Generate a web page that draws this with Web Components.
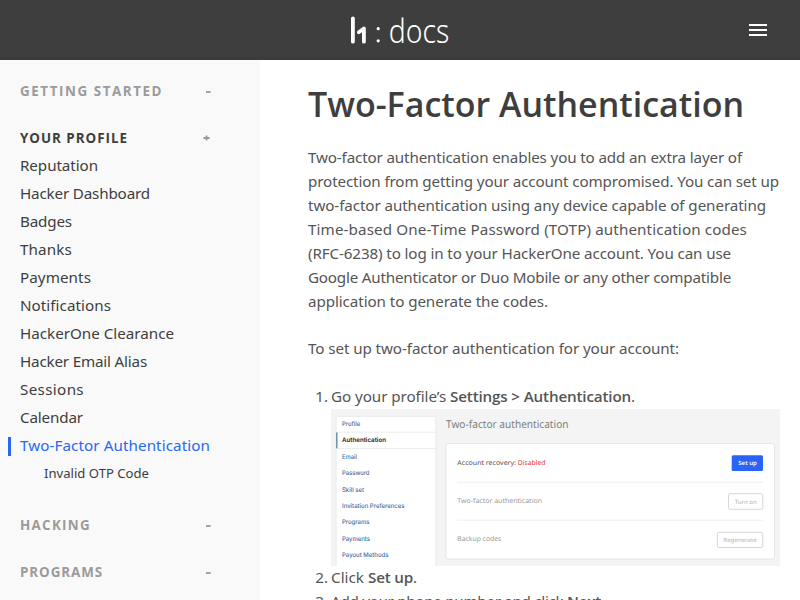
<!DOCTYPE html>
<html lang="en">
<head>
<meta charset="utf-8">
<title>Two-Factor Authentication</title>
<style>
html,body{margin:0;height:600px;overflow:hidden;background:#fff}
body{font-family:"Noto Sans","Open Sans",sans-serif;font-size:15.2px;color:#555}
strong{font-weight:650;font-family:"Open Sans","Noto Sans",sans-serif;font-size:15.2px}
</style>
</head>
<body>
<docs-page>
  <docs-header slot="header"></docs-header>
  <docs-sidebar slot="sidebar">
    <nav-section label="GETTING STARTED" w="143" mark="-"></nav-section>
    <nav-section label="YOUR PROFILE" w="108" mark="+" open>
      <nav-item w="78">Reputation</nav-item>
      <nav-item w="130">Hacker Dashboard</nav-item>
      <nav-item w="52">Badges</nav-item>
      <nav-item w="52">Thanks</nav-item>
      <nav-item w="71">Payments</nav-item>
      <nav-item w="91">Notifications</nav-item>
      <nav-item w="154">HackerOne Clearance</nav-item>
      <nav-item w="127">Hacker Email Alias</nav-item>
      <nav-item w="64">Sessions</nav-item>
      <nav-item w="63">Calendar</nav-item>
      <nav-item w="190" active>Two-Factor Authentication</nav-item>
      <nav-item w="105" sub>Invalid OTP Code</nav-item>
    </nav-section>
    <nav-section label="HACKING" w="71" mark="-"></nav-section>
    <nav-section label="PROGRAMS" w="83" mark="-"></nav-section>
  </docs-sidebar>
  <docs-article>
    <fit-line slot="title" w="436">Two-Factor Authentication</fit-line>
    <text-block>
      <fit-line w="434">Two-factor authentication enables you to add an extra layer of</fit-line>
      <fit-line w="471">protection from getting your account compromised. You can set up</fit-line>
      <fit-line w="458">two-factor authentication using any device capable of generating</fit-line>
      <fit-line w="439">Time-based One-Time Password (TOTP) authentication codes</fit-line>
      <fit-line w="423">(RFC-6238) to log in to your HackerOne account. You can use</fit-line>
      <fit-line w="423">Google Authenticator or Duo Mobile or any other compatible</fit-line>
      <fit-line w="240">application to generate the codes.</fit-line>
    </text-block>
    <text-block><fit-line w="371">To set up two-factor authentication for your account:</fit-line></text-block>
    <step-item n="1."><fit-run><fit-line w="119">Go your profile’s&nbsp;</fit-line><fit-line w="181"><strong>Settings &gt; Authentication</strong></fit-line><span>.</span></fit-run><settings-preview></settings-preview></step-item>
    <step-item n="2."><fit-run><fit-line w="37">Click&nbsp;</fit-line><fit-line w="45"><strong>Set up</strong></fit-line><span>.</span></fit-run></step-item>
    <step-item n="3."><fit-run><fit-line w="236">Add your phone number and click&nbsp;</fit-line><fit-line w="34"><strong>Next</strong></fit-line><span>.</span></fit-run></step-item>
  </docs-article>
</docs-page>
<script>
class Base extends HTMLElement{
  connectedCallback(){
    if(this.shadowRoot) return;
    this.attachShadow({mode:'open'}).innerHTML=this.view();
    if(this.ready) this.ready();
  }
}
/* One line of text whose tracking is set so that it fills the width in "w". */
class FitLine extends Base{
  view(){return `<style>:host{display:block;white-space:nowrap}span{display:inline-block}</style><span><slot></slot></span>`}
  ready(){
    const s=this.shadowRoot.querySelector('span');
    s.style.letterSpacing='0px';
    const n=this.textContent.length;
    s.style.letterSpacing=((+this.getAttribute('w')-s.getBoundingClientRect().width)/n)+'px';
  }
}
class FitRun extends Base{
  view(){return `<style>:host{display:flex;align-items:baseline;height:24px}</style><slot></slot>`}
}
class DocsPage extends Base{
  view(){return `<style>:host{display:grid;grid-template:60px 540px/260px 540px;height:600px;overflow:hidden}
  slot[name=header]::slotted(*){grid-column:1/3}</style><slot name="header"></slot><slot name="sidebar"></slot><slot></slot>`}
}
class DocsHeader extends Base{
  view(){return `<style>:host{display:grid;grid-template-columns:1fr 100px 1fr;align-items:center;background:#3e3e3e;box-sizing:border-box;border-bottom:3px solid #3c3a3a;height:60px}
  .logo{grid-column:2;display:block;height:40px;width:100px;margin-top:2px}
  .menu{justify-self:end;margin:3px 33px 0 0;width:18px;height:12px;display:block}</style>
  <svg class="logo" viewBox="0 0 100 40" fill="#fff"><path d="M2.9 8.3V31.7" stroke="#fff" stroke-width="3.8" stroke-linecap="round"/><path d="M8.8 22.2L13.9 18.6V31.7" fill="none" stroke="#fff" stroke-width="3.8" stroke-linecap="round" stroke-linejoin="round"/>
  <circle cx="28.2" cy="18.7" r="1.6"/><circle cx="28.2" cy="30.8" r="1.6"/>
  <text x="38.8" y="32.7" font-family="Noto Sans" font-weight="300" font-size="33.5" textLength="60.5" lengthAdjust="spacingAndGlyphs">docs</text></svg>
  <svg class="menu" viewBox="0 0 18 12" fill="#fff"><path d="M0 0h18v2H0zM0 5h18v2H0zM0 10h18v2H0z"/></svg>`}
}
class DocsSidebar extends Base{
  view(){return `<style>:host{display:block;background:#f9f9f9;padding-top:17px;box-sizing:border-box;color:#3e3e3e}</style><slot></slot>`}
}
class NavSection extends Base{
  view(){const o=this.hasAttribute('open');return `<style>:host{display:block;margin-bottom:${o?24:19}px}
  .h{display:flex;justify-content:space-between;height:28px;line-height:28px;padding:0 48px 0 20px;font-size:13.4px;font-weight:700;font-family:"Open Sans",sans-serif;color:${o?'#3e3e3e':'#9b9b9b'}}
  .m{width:8px;display:flex;align-items:center;justify-content:center}.m svg{flex:none;width:7px;height:6px;display:block;margin-right:${o?3:0}px}</style>
  <div class="h"><fit-line w="${this.getAttribute('w')}">${this.getAttribute('label')}</fit-line><span class="m" aria-label="${o?'Collapse':'Expand'}"><svg viewBox="0 0 7 6" fill="none" stroke="#999" stroke-width="1.8"><path d="${o?'M.4 3h6.200M3.5 .6v4.8':'M1 4h4.7'}"/></svg></span></div><slot></slot>`}
}
class NavItem extends Base{
  view(){const a=this.hasAttribute('active'),s=this.hasAttribute('sub');return `<style>:host{display:flex;align-items:center;height:${s?27:28}px;line-height:${s?26:27}px;padding-left:${s?44:8}px;color:${a?'#2768f5':'#3e3e3e'};font-size:${s?13.1:15.2}px}
  i{width:3px;height:19px;margin:0 9px 0 0;background:${a?'#2768f5':'transparent'};display:${s?'none':'block'}}fit-line{margin-top:-1px}</style><i></i><fit-line w="${this.getAttribute('w')}"><slot></slot></fit-line>`}
  ready(){
    const f=this.shadowRoot.querySelector('fit-line');
    f.textContent=this.textContent;
    const s=f.shadowRoot.querySelector('span');s.style.letterSpacing='0px';
    s.style.letterSpacing=((+this.getAttribute('w')-s.getBoundingClientRect().width)/f.textContent.length)+'px';
  }
}
class DocsArticle extends Base{
  view(){return `<style>:host{display:block;padding:20px 20px 0 48px;line-height:24px;min-width:0}
  h1{margin:0 0 16px;font:650 34px/48px "Open Sans","Noto Sans",sans-serif;height:49px;color:#3e3e3e}</style><h1><slot name="title"></slot></h1><slot></slot>`}
}
class TextBlock extends Base{
  view(){return `<style>:host{display:block;margin-bottom:23px}:host(:nth-of-type(2)){margin-bottom:24px}</style><slot></slot>`}
}
class StepItem extends Base{
  view(){return `<style>:host{display:grid;grid-template-columns:20px 449px;column-gap:3px}b{font-weight:400;text-align:right}</style><b>${this.getAttribute('n')}</b><div><slot></slot></div>`}
}
class SettingsPreview extends Base{
  view(){
    const nav=[['Profile',15.2,18.3],['Authentication',31.2,44],['Email',47.8,15],['Password',64.1,27.5],['Skill set',80.4,22],['Invitation Preferences',96.7,62.5],['Programs',113,27.5],['Payments',129.4,28],['Payout Methods',145.7,46.5]];
    const t=(x,y,w,f,c,s,e='')=>`<text x="${x}" y="${y}" textLength="${w}" lengthAdjust="spacingAndGlyphs" fill="${c}" font-size="${f}" ${e}>${s}</text>`;
    return `<style>:host{display:block;height:156px;padding-top:1px}svg{display:block;width:449px;height:157px;margin-bottom:-1px;font-family:"Noto Sans",sans-serif;text-rendering:geometricPrecision}.n{font-family:Inter,sans-serif;font-weight:500}</style>
    <svg viewBox="0 0 449 157"><path fill="#f4f4f4" d="M0 0h449v157H0z"/>
    <path d="M5.2 157V9.5q0-2 2-2h95.600q2 0 2 2V157" fill="#fff" stroke="#e9eaeb" stroke-width=".8"/>
    <path d="M5 23.200h100M5 39.500h100" stroke="#e6e8ea" stroke-width=".8"/><path d="M5.800 23.500v15.800" stroke="#6c8fb6" stroke-width="1.500"/>
    <g class="n">${nav.map((r,i)=>t(11,r[1]+2.2,r[2],6.3,i==1?'#222':'#3d6ea5',r[0],i==1?'font-weight="600"':'')).join('')}</g>
    ${t(115,18.6,122.500,10.8,'#808080','Two-factor authentication')}
    <rect x="115" y="34.600" width="328.500" height="115.500" rx="2" fill="#fff" stroke="#e5e5e7"/>
    <path d="M126.300 73.300H432M126.300 111.200H432" stroke="#ececed" stroke-width=".8"/>
    ${t(126.3,55.8,58.7,6.7,'#505050','Account recovery:')}${t(186.7,55.8,27.8,6.7,'#e0383e','Disabled')}
    ${t(126.3,94.2,84.700,6.700,'#999','Two-factor authentication')}${t(126.3,132.300,44,6.700,'#999','Backup codes')}
    <rect x="400.700" y="46.200" width="31.300" height="15.800" rx="1.500" fill="#2864f5"/>
    <g fill="#fff" stroke="#d2d3d5" stroke-width=".9"><rect x="397.500" y="84.700" width="34.300" height="15.600" rx="1.500"/><rect x="386.400" y="123.300" width="45.400" height="15.200" rx="1.500"/></g>
    ${t(407.3,56.200,18.500,5.800,'#fff','Set up','font-weight="600"')}${t(403.700,94.500,22,5.800,'#b0b2b5','Turn on')}${t(392.300,132.900,33.500,5.800,'#b0b2b5','Regenerate')}
    </svg>`}
}
customElements.define('docs-page',DocsPage);
customElements.define('docs-header',DocsHeader);
customElements.define('docs-sidebar',DocsSidebar);
customElements.define('docs-article',DocsArticle);
customElements.define('text-block',TextBlock);
customElements.define('step-item',StepItem);
customElements.define('fit-run',FitRun);
customElements.define('fit-line',FitLine);
customElements.define('nav-section',NavSection);
customElements.define('nav-item',NavItem);
customElements.define('settings-preview',SettingsPreview);
</script>
</body>
</html>
